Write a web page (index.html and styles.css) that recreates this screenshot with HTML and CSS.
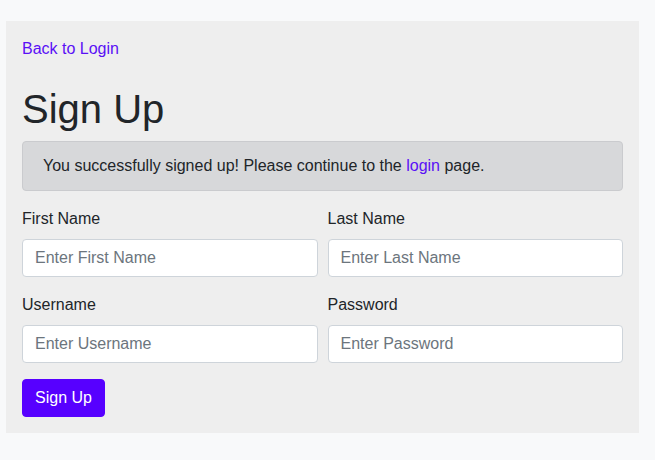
FILE: index.html
```html
<!DOCTYPE html>
<html lang="en">
<head>
<meta charset="utf-8">
<title>Sign Up</title>
<link rel="stylesheet" href="styles.css">
</head>
<body>
<div class="card">
  <div class="back"><a href="#">Back to Login</a></div>
  <h1 class="title">Sign Up</h1>
  <div class="alert">You successfully signed up! Please continue to the <a href="#">login</a> page.</div>
  <form class="form">
    <div class="row">
      <div class="group">
        <label class="label" for="fn">First Name</label>
        <input class="input" id="fn" type="text" placeholder="Enter First Name">
      </div>
      <div class="group">
        <label class="label" for="ln">Last Name</label>
        <input class="input" id="ln" type="text" placeholder="Enter Last Name">
      </div>
    </div>
    <div class="row">
      <div class="group">
        <label class="label" for="un">Username</label>
        <input class="input" id="un" type="text" placeholder="Enter Username">
      </div>
      <div class="group">
        <label class="label" for="pw">Password</label>
        <input class="input" id="pw" type="password" placeholder="Enter Password">
      </div>
    </div>
    <button class="btn" type="button">Sign Up</button>
  </form>
</div>
</body>
</html>
```
FILE: styles.css
```css
* { box-sizing: border-box; }
html, body { margin: 0; padding: 0; }
body {
  background: #f8f9fa;
  font-family: "Liberation Sans", Arial, sans-serif;
  font-size: 16px;
  line-height: 24px;
  color: #212529;
  padding: 21px 16px 0 6px;
}
a { color: #5a10f6; text-decoration: none; }
.card {
  background: #eeeeee;
  padding: 16px;
  width: 633px;
}
.back { margin-bottom: 24px; }
.title {
  font-size: 40px;
  font-weight: 400;
  line-height: 48px;
  margin: 0 0 8px 0;
}
.alert {
  background: #d7d8da;
  border: 1px solid #cacbce;
  border-radius: 4px;
  padding: 12px 20px;
  margin-bottom: 16px;
  color: #212529;
}
.form { margin: 0; }
.row {
  display: grid;
  grid-template-columns: 1fr 1fr;
  column-gap: 10px;
  margin-bottom: 16px;
}
.group { display: flex; flex-direction: column; }
.label { margin-bottom: 8px; }
.input {
  height: 38px;
  border: 1px solid #ced4da;
  border-radius: 4px;
  background: #fff;
  padding: 6px 12px;
  font-family: inherit;
  font-size: 16px;
  color: #495057;
}
.input::placeholder { color: #6c757d; }
.btn {
  display: block;
  height: 38px;
  padding: 6px 12px;
  border: 1px solid #5700ff;
  border-radius: 4px;
  background: #5700ff;
  color: #fff;
  font-family: inherit;
  font-size: 16px;
  line-height: 24px;
}
```
